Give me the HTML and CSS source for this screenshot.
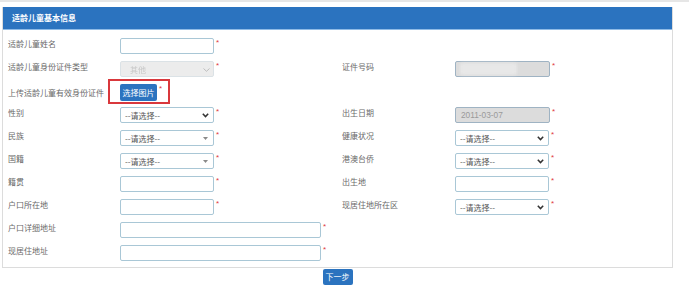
FILE: index.html
```html
<!DOCTYPE html>
<html lang="zh-CN">
<head>
<meta charset="utf-8">
<title>适龄儿童基本信息</title>
<link rel="stylesheet" href="styles.css">
</head>
<body>
<div class="topbar"></div>
<div class="panel">
  <div class="panel-head">适龄儿童基本信息</div>
  <div class="panel-body">
    <div class="lbl">适龄儿童姓名</div>
    <div class="fld"><input class="ctl" type="text"><span class="req">*</span></div>
    <div class="lbl"></div>
    <div class="fld"></div>

    <div class="lbl">适龄儿童身份证件类型</div>
    <div class="fld">
      <div class="sel disabled"><select class="ctl" disabled><option>其他</option></select>
        <svg class="caret" width="7" height="4" viewBox="0 0 7 4"><path d="M0.5 0.5 L3.5 3.3 L6.5 0.5" fill="none" stroke="#b9b9b9" stroke-width="0.9"/></svg>
      </div><span class="req">*</span>
    </div>
    <div class="lbl">证件号码</div>
    <div class="fld">
      <div class="masked"><input class="ctl dis" type="text" disabled><span class="blur"></span></div><span class="req">*</span>
    </div>

    <div class="lbl up-lbl">上传适龄儿童有效身份证件</div>
    <div class="fld up-fld">
      <div class="upload"><button class="btn">选择图片</button><span class="req">*</span><span class="mark"></span></div>
    </div>
    <div class="lbl"></div>
    <div class="fld"></div>

    <div class="lbl">性别</div>
    <div class="fld">
      <div class="sel"><select class="ctl"><option>--请选择--</option></select>
        <svg class="caret" width="7" height="5" viewBox="0 0 7 5"><path d="M0.8 0.8 L3.5 3.6 L6.2 0.8" fill="none" stroke="#333" stroke-width="1.5"/></svg>
      </div><span class="req">*</span>
    </div>
    <div class="lbl">出生日期</div>
    <div class="fld"><input class="ctl dis date" type="text" value="2011-03-07" disabled><span class="req">*</span></div>

    <div class="lbl">民族</div>
    <div class="fld">
      <div class="sel"><select class="ctl"><option>--请选择--</option></select>
        <svg class="caret tri" width="5" height="3" viewBox="0 0 5 3"><path d="M0 0 L5 0 L2.5 3 Z" fill="#8a8a8a"/></svg>
      </div><span class="req">*</span>
    </div>
    <div class="lbl">健康状况</div>
    <div class="fld">
      <div class="sel"><select class="ctl"><option>--请选择--</option></select>
        <svg class="caret" width="7" height="5" viewBox="0 0 7 5"><path d="M0.8 0.8 L3.5 3.6 L6.2 0.8" fill="none" stroke="#333" stroke-width="1.5"/></svg>
      </div><span class="req">*</span>
    </div>

    <div class="lbl">国籍</div>
    <div class="fld">
      <div class="sel"><select class="ctl"><option>--请选择--</option></select>
        <svg class="caret tri" width="5" height="3" viewBox="0 0 5 3"><path d="M0 0 L5 0 L2.5 3 Z" fill="#8a8a8a"/></svg>
      </div><span class="req">*</span>
    </div>
    <div class="lbl">港澳台侨</div>
    <div class="fld">
      <div class="sel"><select class="ctl"><option>--请选择--</option></select>
        <svg class="caret" width="7" height="5" viewBox="0 0 7 5"><path d="M0.8 0.8 L3.5 3.6 L6.2 0.8" fill="none" stroke="#333" stroke-width="1.5"/></svg>
      </div><span class="req">*</span>
    </div>

    <div class="lbl">籍贯</div>
    <div class="fld"><input class="ctl" type="text"><span class="req">*</span></div>
    <div class="lbl">出生地</div>
    <div class="fld"><input class="ctl" type="text"><span class="req">*</span></div>

    <div class="lbl">户口所在地</div>
    <div class="fld"><input class="ctl" type="text"><span class="req">*</span></div>
    <div class="lbl">现居住地所在区</div>
    <div class="fld">
      <div class="sel"><select class="ctl"><option>--请选择--</option></select>
        <svg class="caret" width="7" height="5" viewBox="0 0 7 5"><path d="M0.8 0.8 L3.5 3.6 L6.2 0.8" fill="none" stroke="#333" stroke-width="1.5"/></svg>
      </div><span class="req">*</span>
    </div>

    <div class="lbl">户口详细地址</div>
    <div class="fld wide"><input class="ctl long" type="text"><span class="req">*</span></div>

    <div class="lbl">现居住地址</div>
    <div class="fld wide"><input class="ctl long" type="text"><span class="req">*</span></div>
  </div>
</div>
<div class="actions"><button class="btn next">下一步</button></div>
</body>
</html>
```

FILE: styles.css
```css
* { box-sizing: border-box; }
html, body { margin: 0; padding: 0; background: #fff; }
body {
  font-family: "Noto Sans CJK SC", "Liberation Sans", sans-serif;
  font-size: 8px;
  color: #666;
  width: 689px;
  height: 301px;
  overflow: hidden;
}
.topbar { height: 2px; background: #e6e6e6; }
.panel {
  margin: 5px 0 0 2px;
  width: 671px;
  border: 1px solid #dcdcdc;
  border-top: none;
  background: #fff;
}
.panel-head {
  height: 23px;
  background: #2b73bf;
  border-bottom: 1px solid #8fbbe6;
  color: #fff;
  font-weight: bold;
  font-size: 8px;
  line-height: 22px;
  padding-left: 9px;
}
.panel-body {
  display: grid;
  grid-template-columns: 112px 222px 113px 1fr;
  grid-auto-rows: 16px;
  row-gap: 7px;
  padding: 8px 0 6px 5px;
}
.lbl {
  line-height: 12px;
  color: #6a6a6a;
  white-space: nowrap;
}
.fld { display: flex; align-items: flex-start; }
.fld.wide { grid-column: 2 / 5; }
.req {
  color: #e0393e;
  font-size: 8px;
  line-height: 8px;
  margin-left: 2px;
  margin-top: 1px;
  font-family: "Liberation Sans", sans-serif;
}
.ctl {
  display: block;
  width: 94px;
  height: 16px;
  margin: 0;
  border: 1px solid #a9c7d6;
  border-radius: 2px;
  background: #fff;
  font-family: "Noto Sans CJK SC", "Liberation Sans", sans-serif;
  font-size: 8px;
  color: #555;
  padding: 0 4px;
  outline: none;
}
.ctl.long { width: 201px; }
.ctl.dis {
  background: #dcdcdc;
  border-color: #9fb3c3;
  color: #9a9a9a;
  width: 95px;
}
.ctl.date { font-family: "Liberation Sans", sans-serif; font-size: 8.3px; padding-left: 5px; }
.sel { position: relative; width: 94px; height: 16px; }
.sel select.ctl { appearance: none; -webkit-appearance: none; width: 100%; padding-left: 4px; }
.sel.disabled select.ctl { background: #e4e4e4; border-color: #cdd6dc; color: #b0b0b0; padding-left: 9px; }
.caret { position: absolute; right: 5px; top: 6px; }
.caret.tri { right: 6px; top: 7px; }
.sel.disabled .caret { right: 4px; top: 7px; }
.masked { position: relative; }
.blur {
  position: absolute;
  left: 5px; top: 2px;
  width: 57px; height: 12px;
  background: #e8e8e8;
  border-radius: 2px;
  filter: blur(1.5px);
}
.up-lbl { padding-top: 3px; }
.upload { position: relative; display: flex; align-items: flex-start; }
.btn {
  border: none;
  border-radius: 2px;
  background: #2b73bf;
  color: #fff;
  font-family: "Noto Sans CJK SC", sans-serif;
  font-size: 8px;
  padding: 0;
  margin: 0;
}
.upload .btn { width: 37px; height: 17px; line-height: 17px; }
.mark {
  position: absolute;
  left: -12px; top: -5px;
  width: 62px; height: 25px;
  border: 2px solid #d9383c;
}
.actions { display: flex; justify-content: center; width: 675px; }
.btn.next { width: 30px; height: 16px; line-height: 16px; margin-top: 1px; }
```
